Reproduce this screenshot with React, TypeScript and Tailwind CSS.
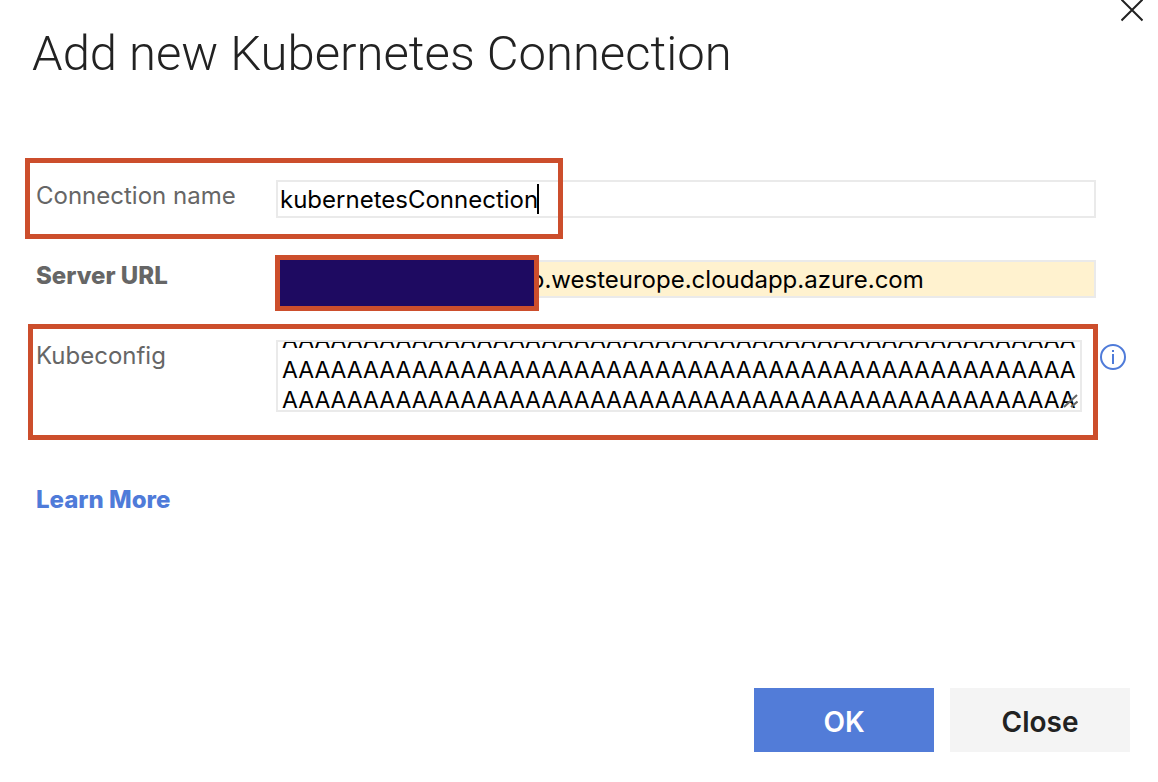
import { useLayoutEffect, useRef } from "react";
import type { ReactNode } from "react";

const configText = "A".repeat(49 * 8);

function Field({ id, label, bold, children }: { id: string; label: string; bold?: boolean; children: ReactNode }) {
  return (
    <div className="flex items-start">
      <label
        htmlFor={id}
        className={`w-60 shrink-0 text-2xl leading-8 text-[#666666] ${bold ? "font-extrabold" : "font-normal"}`}
      >
        {label}
      </label>
      {children}
    </div>
  );
}

function CloseIcon() {
  return (
    <svg viewBox="0 0 22 22" className="block size-[22px]" fill="none" stroke="#222222" strokeWidth="2">
      <path d="M0.500 -0.500L21.500 20.500M21.500 -0.500L0.500 20.500" />
    </svg>
  );
}

function InfoIcon() {
  return (
    <svg viewBox="0 0 26 26" className="block size-[26px]" fill="none" stroke="#4f7bd9">
      <circle cx="13" cy="13" r="12" strokeWidth="2" />
      <path d="M13 10V20M13 6V8" strokeWidth="2" />
    </svg>
  );
}

export default function App() {
  const configRef = useRef<HTMLTextAreaElement>(null);

  useLayoutEffect(() => {
    if (configRef.current) configRef.current.scrollTop = 137;
  }, []);

  return (
    <main className="flex min-h-screen flex-col bg-white font-['Inter','Liberation_Sans',sans-serif] text-black">
      <header className="flex items-start justify-between pr-[15px] pl-8">
        <h1 className="pt-6 font-['Roboto','Inter',sans-serif] text-[49px] leading-[60px] font-light text-[#222222]">
          Add new Kubernetes Connection
        </h1>
        <button type="button" aria-label="Close dialog" className="shrink-0">
          <CloseIcon />
        </button>
      </header>

      <form className="flex grow flex-col" onSubmit={(e) => e.preventDefault()}>
        <div className="flex flex-col gap-[42px] pt-24 pr-[62px] pl-9">
          <div className="relative">
            <Field id="name" label="Connection name">
              <div className="relative grow">
                <input
                  id="name"
                  type="text"
                  defaultValue="kubernetesConnection"
                  className="block h-[38px] w-full border-2 border-[#eaeaea] bg-white px-0.5 text-2xl leading-[34px] outline-none"
                />
                <span className="absolute top-1 left-[261px] h-[30px] w-0.5 bg-black" />
              </div>
            </Field>
            <div className="pointer-events-none absolute -top-[22px] -left-[11px] h-[81px] w-[538px] border-[5px] border-[#cc4e2c]" />
          </div>

          <Field id="url" label="Server URL" bold>
            <div className="relative grow">
              <input
                id="url"
                type="text"
                defaultValue="o.westeurope.cloudapp.azure.com"
                className="block h-[38px] w-full border-2 border-[#eaeaea] bg-[#fff2cf] pr-0.5 pl-[252px] text-2xl leading-[34px] outline-none"
              />
              <div className="absolute -top-[5px] -left-px h-14 w-[264px] border-[5px] border-[#cc4e2c] bg-[#1e0a61]" />
            </div>
          </Field>

          <div className="relative -mr-[34px]">
            <Field id="config" label="Kubeconfig">
              <div className="relative grow">
                <textarea
                  id="config"
                  ref={configRef}
                  defaultValue={configText}
                  className="block h-[72px] w-full resize-none overflow-hidden border-2 border-[#eaeaea] bg-white pr-0.5 pl-1 text-[23px] leading-[30px] break-all outline-none"
                />
                <svg viewBox="0 0 16 16" className="absolute right-1 bottom-1 size-4" fill="none">
                  <path d="M2 15L15 3M9 15L15.500 9.500" stroke="#666666" strokeWidth="2" />
                </svg>
              </div>
              <button type="button" aria-label="About Kubeconfig" className="mt-1 mr-1 ml-[18px] shrink-0">
                <InfoIcon />
              </button>
            </Field>
            <div className="pointer-events-none absolute -top-4 right-8 -left-2 h-[116px] border-[5px] border-[#cc4e2c]" />
          </div>
        </div>

        <a href="#learn-more" className="mt-[72px] ml-9 self-start text-2xl leading-8 font-extrabold text-[#4f7bd9]">
          Learn More
        </a>

        <footer className="mt-auto flex justify-end gap-4 pr-7 pb-[30px]">
          <button type="submit" className="h-16 w-[180px] bg-[#527cd8] pt-1 text-[28px] leading-9 font-semibold text-white">
            OK
          </button>
          <button type="button" className="h-16 w-[180px] bg-[#f4f4f4] pt-1 text-[28px] leading-9 font-semibold text-[#222222]">
            Close
          </button>
        </footer>
      </form>
    </main>
  );
}
